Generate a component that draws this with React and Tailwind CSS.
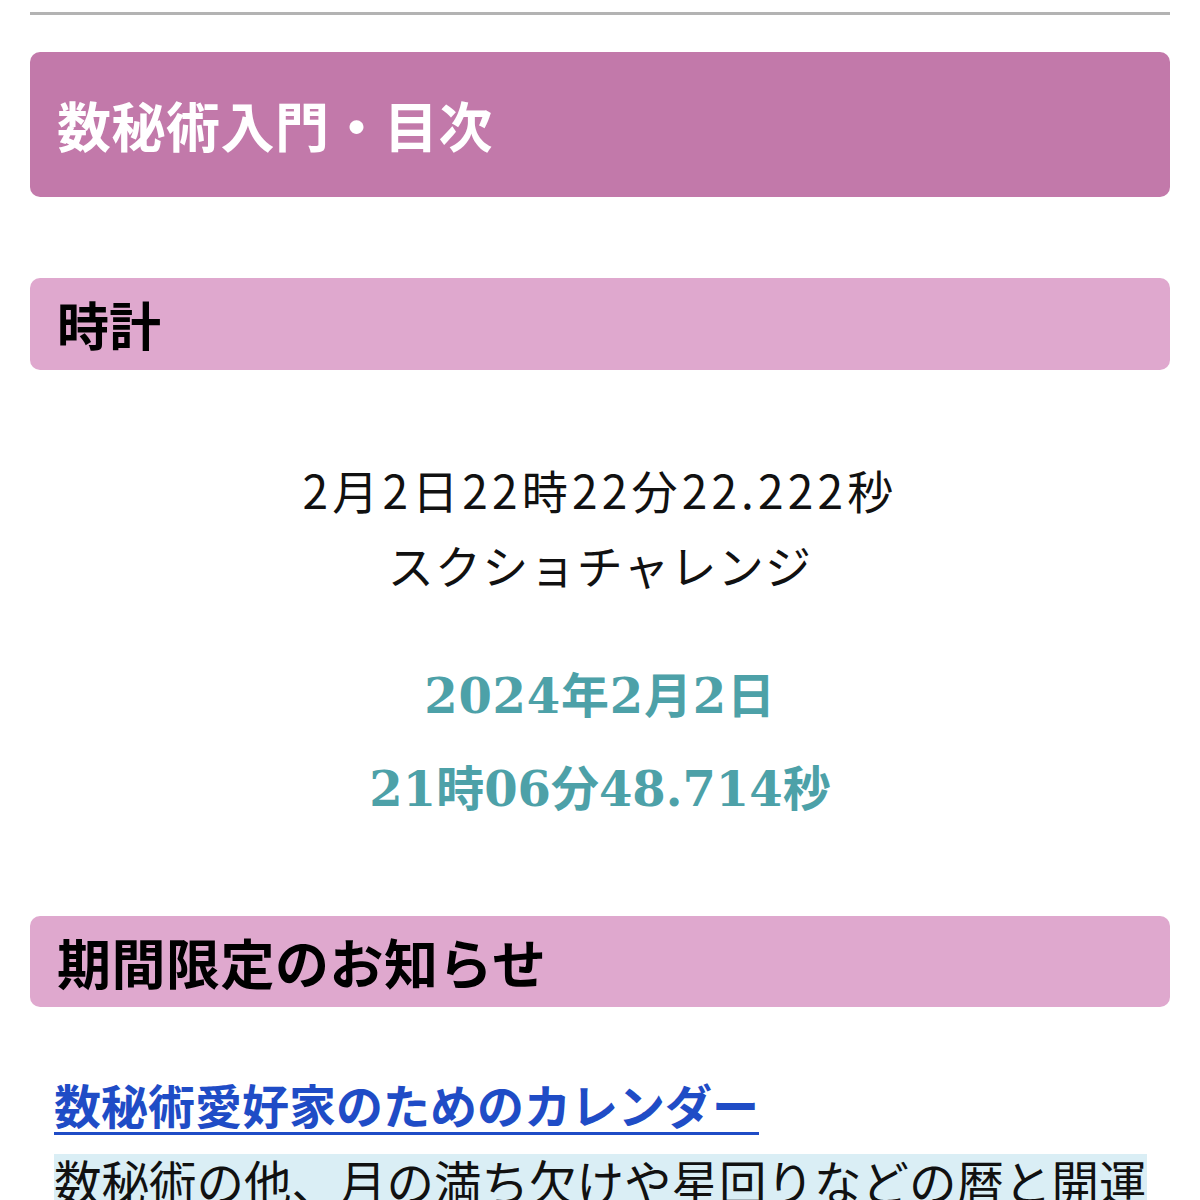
import React from "react";

export default function App() {
  const sans = { fontFamily: '"Noto Sans CJK JP", "Noto Sans", sans-serif' };
  return (
    <div className="w-[1200px] h-[1200px] overflow-hidden bg-white px-[30px] pt-[12px]" style={sans}>
      <div className="h-[3px] bg-[#b3b3b3]" />
      <div className="mt-[37px] h-[145px] rounded-[10px] bg-[#c279aa] flex items-center pl-[27px]">
        <h1 className="text-[54px] font-bold text-white leading-none tracking-[0.5px]">数秘術入門・目次</h1>
      </div>
      <div className="mt-[81px] h-[92px] rounded-[10px] bg-[#dfa8ce] flex items-center pl-[27px]">
        <h2 className="text-[52px] font-bold text-black leading-none">時計</h2>
      </div>
      <div className="mt-[82px] text-center text-[46px] leading-[75px] text-[#111]">
        <p className="tracking-[4.2px]">2月2日22時22分22.222秒</p>
        <p className="tracking-[1.2px]">スクショチャレンジ</p>
      </div>
      <div
        className="mt-[48px] text-center text-[48px] leading-[93px] font-bold text-[#4da1a8]"
        style={{ fontFamily: '"DejaVu Serif", "Noto Sans CJK JP", serif' }}
      >
        <p className="tracking-[0.8px]">2024年2月2日</p>
        <p>21時06分48.714秒</p>
      </div>
      <div className="mt-[80px] h-[91px] rounded-[10px] bg-[#dfa8ce] flex items-center pl-[27px]">
        <h2 className="text-[54px] font-bold text-black leading-none tracking-[0.5px]">期間限定のお知らせ</h2>
      </div>
      <div className="pl-[24px] mt-[61px]">
        <p className="text-[47px] leading-[72px] font-bold">
          <a href="#" className="text-[#1f4cc6] underline decoration-[3px] underline-offset-[8px]">
            数秘術愛好家のためのカレンダー
          </a>
        </p>
        <p className="mt-[1px] text-[47.5px] leading-[80px] text-[#111] whitespace-nowrap">
          <span className="bg-[linear-gradient(to_bottom,transparent_8px,#daeef5_8px)]">数秘術の他、月の満ち欠けや星回りなどの暦と開運</span>
        </p>
      </div>
    </div>
  );
}
